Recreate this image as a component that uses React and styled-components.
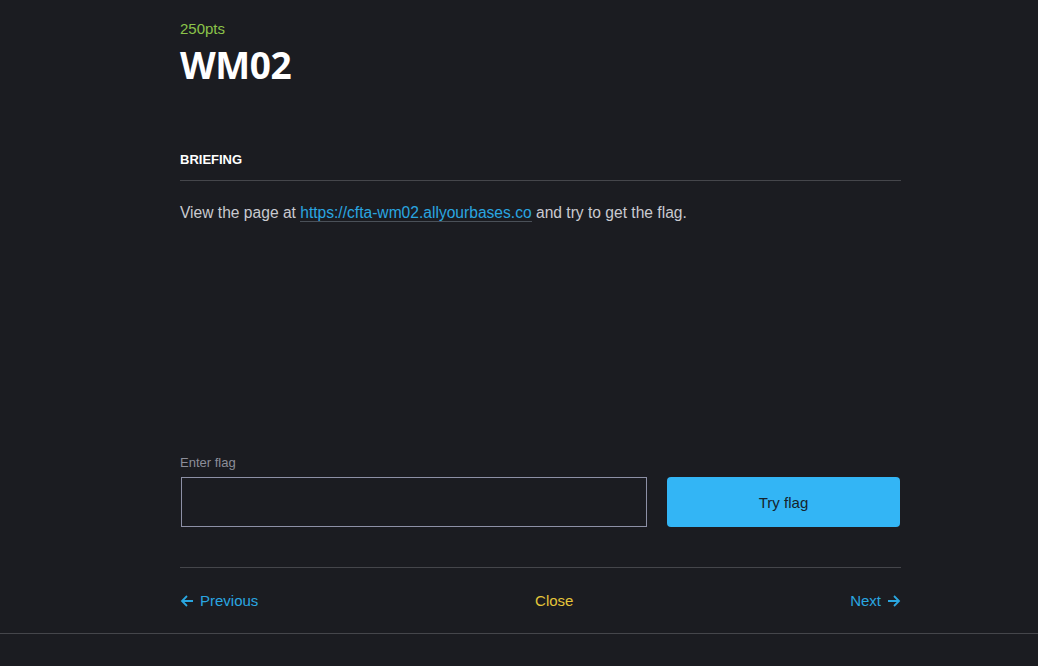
import React from "react";
import styled, { createGlobalStyle } from "styled-components";

const Global = createGlobalStyle`
  html, body {
    margin: 0;
    padding: 0;
    background: #1b1c21;
    font-family: "Liberation Sans", Arial, sans-serif;
  }
`;

const Page = styled.div`
  min-height: 666px;
  background: #1b1c21;
`;

const Modal = styled.div`
  border-bottom: 1px solid #45464b;
`;

const Column = styled.div`
  width: 721px;
  margin-left: 180px;
  padding-top: 20px;
`;

const Points = styled.div`
  color: #8bc34a;
  font-size: 15px;
  line-height: 18px;
`;

const Title = styled.h1`
  margin: 4px 0 0;
  color: #ffffff;
  font-family: "Open Sans", sans-serif;
  font-weight: 700;
  font-size: 37px;
  line-height: 46px;
  letter-spacing: -0.4px;
`;

const SectionHead = styled.h2`
  margin: 64px 0 0;
  padding-bottom: 12px;
  border-bottom: 1px solid #45464b;
  color: #ffffff;
  font-size: 13px;
  font-weight: 700;
  line-height: 16px;
`;

const Body = styled.p`
  margin: 22px 0 0;
  color: #c9cad0;
  font-size: 15.6px;
  line-height: 20px;
  height: 252px;
`;

const Link = styled.a`
  color: #2aa6e0;
  text-decoration: none;
  border-bottom: 1px solid #4a5058;
`;

const Label = styled.label`
  display: block;
  color: #8c8e99;
  font-size: 13px;
  line-height: 16px;
  margin-bottom: 6px;
`;

const FormRow = styled.div`
  display: flex;
  gap: 20px;
`;

const Input = styled.input`
  width: 466px;
  height: 50px;
  margin: 0 0 0 1px;
  box-sizing: border-box;
  background: transparent;
  border: 1px solid #8d90a6;
  color: #fff;
  outline: none;
`;

const Button = styled.button`
  flex: 1;
  height: 50px;
  margin-right: 1px;
  background: #33b5f5;
  border: none;
  border-radius: 4px;
  color: #16232c;
  font-family: inherit;
  font-size: 15px;
  cursor: pointer;
`;

const Nav = styled.div`
  margin-top: 40px;
  border-top: 1px solid #45464b;
  height: 65px;
  display: flex;
  align-items: center;
  justify-content: space-between;
`;

const NavLink = styled.a`
  display: flex;
  align-items: center;
  gap: 6px;
  color: ${(p) => (p.$gold ? "#e5c53a" : "#2aa6e0")};
  font-size: 15px;
  text-decoration: none;
  cursor: pointer;
`;

const Arrow = ({ dir }) => (
  <svg width="14" height="14" viewBox="0 0 14 14" fill="none" stroke="#2aa6e0" strokeWidth="1.8">
    {dir === "left" ? (
      <path d="M13 7H2M7 2L2 7l5 5" />
    ) : (
      <path d="M1 7h11M7 2l5 5-5 5" />
    )}
  </svg>
);

export default function App() {
  return (
    <Page>
      <Global />
      <Modal>
        <Column>
          <Points>250pts</Points>
          <Title>WM02</Title>
          <SectionHead>BRIEFING</SectionHead>
          <Body>
            View the page at{" "}
            <Link href="#">https://cfta-wm02.allyourbases.co</Link> and try to get the flag.
          </Body>
          <Label>Enter flag</Label>
          <FormRow>
            <Input />
            <Button>Try flag</Button>
          </FormRow>
          <Nav>
            <NavLink>
              <Arrow dir="left" />
              Previous
            </NavLink>
            <NavLink $gold>Close</NavLink>
            <NavLink>
              Next
              <Arrow dir="right" />
            </NavLink>
          </Nav>
        </Column>
      </Modal>
    </Page>
  );
}
